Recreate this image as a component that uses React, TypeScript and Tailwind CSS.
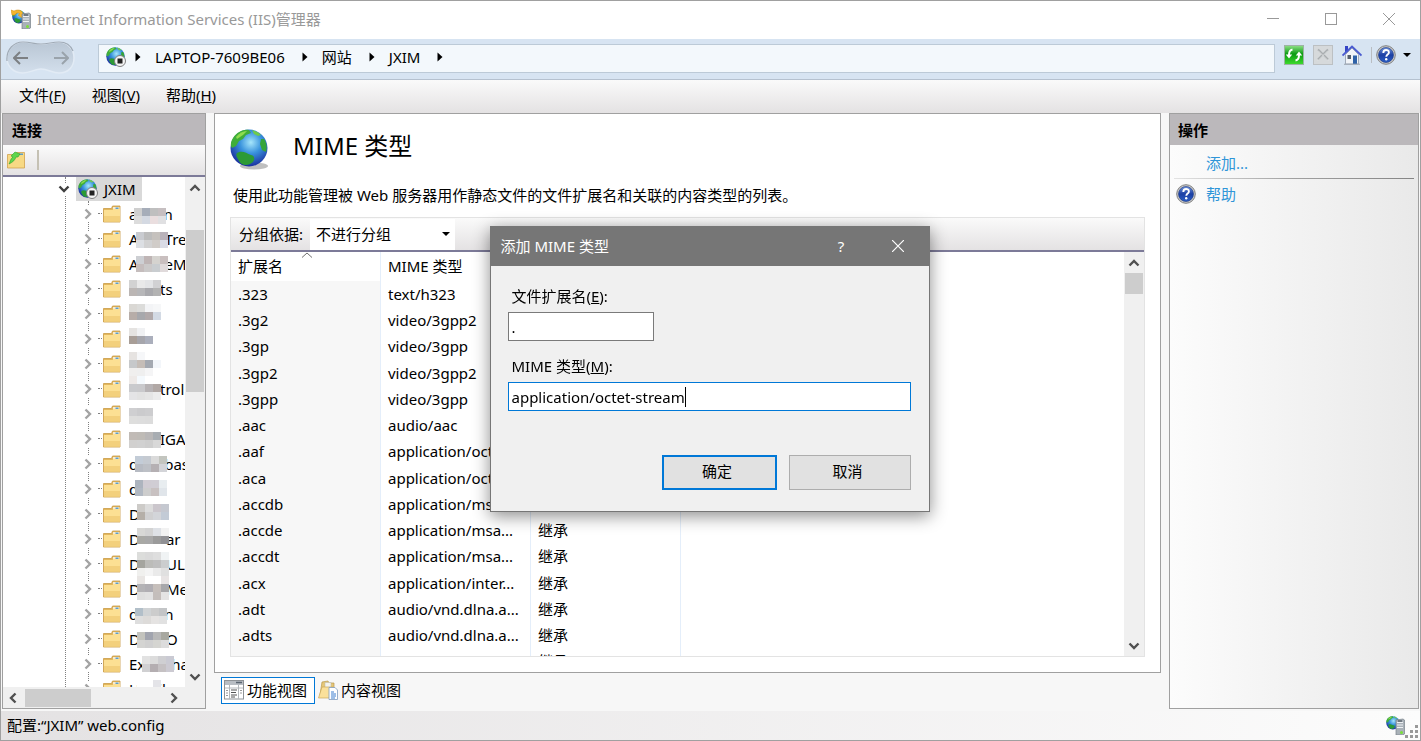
import { useState } from "react";

interface TreeNode {
  pre: string;
  post: string;
  // rows of 8px blocks covering the middle of the name
  cells: string[][];
  y: number;
}

const nodes: TreeNode[] = [
  { pre: "a", post: "n", y: 7, cells: [["#cfcfcf", "#a6adb9", "#bfbfbf", "#c6bfc1"], ["#dcdcdc", "#d4d9e2", "#eadedf", "#e0e0e2"]] },
  { pre: "A", post: "Tre", y: 6, cells: [["#c9cbd0", "#bcbcbc", "#c5c1bd", "#b9b2ba"], ["#dcdfe3", "#d2d2d2", "#d0ccc8", "#d9dbe6"]] },
  { pre: "A", post: "eM", y: 5, cells: [["#cdcfd3", "#bfb5b5", "#d5d3cf", "#c9bfbf"], ["#c5bdbd", "#cbc9c9", "#c9cdd0", "#e0dadb"]] },
  { pre: "", post: "ts", y: 4, cells: [["#d2d2d2", "#e9e9e9", "#e3e4e6", "#d1d1d3"], ["#bbb6b4", "#b7b7b9", "#a9a9ad", "#b3b3b3"]] },
  { pre: "", post: "", y: 3, cells: [["#dad8d4", "#dcdcda", "#f3f4f6", "#f6f7f8"], ["#b7ada8", "#a7a8ac", "#b1a9aa", "#d3dae4"]] },
  { pre: "", post: "", y: 2, cells: [["#e5e3e1", "#f0f1f3"], ["#a89e97", "#a6a6ac", "#abafbc"]] },
  { pre: "", post: "", y: 1, cells: [["#e6e3e1", "#f6f7f9"], ["#c6c8ca", "#c5bdb7", "#a4a9b1", "#f3f6fa"], ["#f0efee", "#efefef", "#f5f5f6"]] },
  { pre: "", post: "trol", y: 0, cells: [["#eeeae8", "#f4f9fd"], ["#c9cacd", "#c9c9cc", "#b7b3b5", "#b1a8a5"], ["#e4e4e6", "#e2e2e2", "#e5e5e5", "#ececec"]] },
  { pre: "", post: "", y: 7, cells: [["#cfcfd1", "#cbcbcd", "#cdcdcf"], ["#dededd", "#dddddd", "#dcdcdc"]] },
  { pre: "", post: "IGA", y: 6, cells: [["#c1bbb6", "#bfbbb6", "#b9b7b7", "#a8adb2"], ["#d1d0cf", "#d1d1d1", "#cecece", "#d8d8d8"]] },
  { pre: "d", post: "bas", y: 5, cells: [["#c3ccd7", "#c5cad1", "#dadada", "#c3c5bf"], ["#b7bbc3", "#bdc0c6", "#b5b0b3", "#d3d4d8"]] },
  { pre: "d", post: "", y: 4, cells: [["#adb4be", "#d0ccd3", "#d0cdd4", "#e8edf0"], ["#b1b8c2", "#cdcdcd", "#c8c1c1", "#e0e5ea"]] },
  { pre: "D", post: "", y: 3, cells: [["#cdcbc8", "#dcdcdc", "#cbc6cc", "#c5c8d0"], ["#b5afa8", "#d0d0d1", "#d3d5d9", "#c3cbd6"]] },
  { pre: "D", post: "ar", y: 2, cells: [["#d8d8d6", "#d3d3d3", "#dee1e6", "#f2f2f2"], ["#a9a9a5", "#a8a8a8", "#9b9b9b", "#919195"]] },
  { pre: "D", post: "UL", y: 1, cells: [["#dcdddb", "#dadada", "#dedede", "#f0f3f4"], ["#a5a59f", "#bcbcb9", "#bfbfbf", "#cbcdce"], ["#f0f0ee", "#f4f4f4", "#eaeaea", "#e0e0e0"]] },
  { pre: "D", post: "Me", y: 0, cells: [["#e9e6e4", "#ffffff", "#ffffff", "#e8e4e4"], ["#b4b3b6", "#b0aeb3", "#c6bfbb", "#a7a7aa"], ["#dfdfdf", "#e2e2e2", "#c4bebb", "#e4e4e4"]] },
  { pre: "d", post: "n", y: 7, cells: [["#b2bfc9", "#d0d3d5", "#cccccc", "#c3c5c7"], ["#dedede", "#dddbd9", "#e5e3e2", "#e1e1e1"]] },
  { pre: "D", post: "O", y: 6, cells: [["#c3c3bd", "#a1a4ae", "#b8b8b8", "#a8a8a0"], ["#d4d4d2", "#d0d0d0", "#d5d5d1", "#dcdcdc"]] },
  { pre: "Ex", post: "ha", y: 5, cells: [["#e2e2e2", "#dcdcdc", "#cfcfd2", "#cacad3"], ["#d0d0d2", "#b4aeb1", "#c5c1c3", "#cccad2"]] },
  { pre: "H", post: "il", y: 4, cells: [["#ffffff", "#ffffff", "#e4e4e8"]] },
];

const mimeTypes = [
  [".323", "text/h323"],
  [".3g2", "video/3gpp2"],
  [".3gp", "video/3gpp"],
  [".3gp2", "video/3gpp2"],
  [".3gpp", "video/3gpp"],
  [".aac", "audio/aac"],
  [".aaf", "application/oct..."],
  [".aca", "application/oct..."],
  [".accdb", "application/msa..."],
  [".accde", "application/msa..."],
  [".accdt", "application/msa..."],
  [".acx", "application/inter..."],
  [".adt", "audio/vnd.dlna.a..."],
  [".adts", "audio/vnd.dlna.a..."],
  [".afm", "application/oct..."],
];

function GlobeBody({ id }: { id: string }) {
  return (
    <>
      <defs>
        <radialGradient id={id} cx="0.55" cy="0.35" r="0.65">
          <stop offset="0" stopColor="#a6e6fb" />
          <stop offset="0.45" stopColor="#3a94dd" />
          <stop offset="1" stopColor="#1a2f9e" />
        </radialGradient>
      </defs>
      <circle cx="19" cy="19" r="18.5" fill={`url(#${id})`} />
      <path d="M3 9C7 3 13 0 19 1l2 3-5 2-3 4-4 2-3 5-4 2C0 16 1 12 3 9z" fill="#3fae3a" />
      <path d="M6 8c3-4 7-6 11-6l-4 4-6 4z" fill="#8fdc4e" />
      <path d="M7 24c5-3 9 0 14 2 5 1 4 7-1 9-4 2-9 1-11-3-1-3-4-5-2-8z" fill="#2c9a35" />
      <path d="M31 10l3 0c3 4 3 9 2 13l-4-2-2-6z" fill="#35a53a" />
      <path d="M22 1c4 1 7 3 9 5l-3 1-4-2z" fill="#6fcb4b" />
    </>
  );
}

function Globe({ id, className }: { id: string; className?: string }) {
  return (
    <svg viewBox="0 0 40 41" className={className} aria-hidden="true">
      <ellipse cx="24" cy="37" rx="14" ry="3.5" fill="#000" opacity="0.25" />
      <GlobeBody id={id} />
    </svg>
  );
}

function SiteIcon({ id }: { id: string }) {
  return (
    <svg viewBox="0 0 40 40" className="size-5 shrink-0" aria-hidden="true">
      <GlobeBody id={id} />
      <circle cx="28" cy="28" r="11" fill="#f4f4f4" stroke="#808080" strokeWidth="2" />
      <rect x="23" y="23" width="10" height="10" fill="#222" />
    </svg>
  );
}

function ServerIcon({ id, arrow }: { id: string; arrow?: boolean }) {
  return (
    <svg viewBox="0 0 20 20" className="size-5 shrink-0" aria-hidden="true">
      <g transform="translate(1 1) scale(0.36)">
        <GlobeBody id={id} />
      </g>
      {arrow && <path d="M0 1l3 1c4-2 8-1 9 3l2 0-3 4-4-3 2-1C7 3 5 4 4 6L1 6z" fill="#f5b52e" stroke="#d38b12" strokeWidth="0.5" />}
      <path d="M11 5l7-1 1.500 1v14l-2 1H11z" fill="#a9b1b8" stroke="#78828a" strokeWidth="0.7" />
      <path d="M12 7.500h6M12 10h6M12 12.500h6" stroke="#eef1f3" strokeWidth="1.2" />
      <path d="M13 6h4" stroke="#39434c" strokeWidth="1" />
      <circle cx="16.500" cy="17.500" r="1.500" fill="#7be03a" />
    </svg>
  );
}

function HelpIcon({ id }: { id: string }) {
  return (
    <svg viewBox="0 0 20 20" className="size-5 shrink-0" aria-hidden="true">
      <defs>
        <linearGradient id={id} x1="0" y1="0" x2="0" y2="1">
          <stop offset="0" stopColor="#6f93dc" />
          <stop offset="0.5" stopColor="#1b3fa4" />
          <stop offset="1" stopColor="#2c5fc6" />
        </linearGradient>
      </defs>
      <circle cx="10" cy="10" r="9.300" fill="#c9c9c9" stroke="#808080" strokeWidth="1" />
      <circle cx="10" cy="10" r="7.500" fill={`url(#${id})`} stroke="#1a3580" strokeWidth="0.6" />
      <path d="M7.300 8c0-4 5.600-3.800 5.600-.6 0 2.200-2.600 2.200-2.600 4.400" fill="none" stroke="#fff" strokeWidth="1.900" />
      <circle cx="10.200" cy="14.200" r="1.200" fill="#fff" />
    </svg>
  );
}

function Folder() {
  return (
    <svg viewBox="0 0 18 18" className="w-[18px] h-[18px] shrink-0" aria-hidden="true">
      <path d="M0.500 17V3.500h8l1-2.500h7.500v16z" fill="#e3b65b" stroke="#c99a45" strokeWidth="0.8" />
      <path d="M10 2h6.500v3H10z" fill="#f6ead0" />
      <rect x="12.500" y="2.500" width="3" height="1.500" fill="#5c9ec9" />
      <path d="M1 5h8.500l1-1H17v12.500H1z" fill="#fce093" />
      <path d="M1 11h16v5.500H1z" fill="#f3d07c" />
    </svg>
  );
}

function Chevron({ dir, className = "" }: { dir: "up" | "down" | "left" | "right"; className?: string }) {
  const d = {
    up: "M1.500 8.500L6 4l4.500 4.500",
    down: "M1.500 3.500L6 8l4.500-4.500",
    left: "M8.500 1.500L4 6l4.500 4.500",
    right: "M3.500 1.500L8 6l-4.500 4.500",
  }[dir];
  return (
    <svg viewBox="0 0 12 12" className={`size-3 shrink-0 ${className}`} aria-hidden="true">
      <path d={d} fill="none" stroke="currentColor" strokeWidth="2.400" />
    </svg>
  );
}

function Triangle() {
  return (
    <svg viewBox="0 0 6 10" className="w-[6px] h-[10px] shrink-0" aria-hidden="true">
      <path d="M0.500 0.500L5.500 5l-5 4.500z" fill="#000" />
    </svg>
  );
}

function DropArrow() {
  return (
    <svg viewBox="0 0 8 4" className="w-2 h-1 shrink-0" aria-hidden="true">
      <path d="M0 0h8L4 4z" fill="#000" />
    </svg>
  );
}

function Mosaic({ cells, y, className }: { cells: string[][]; y: number; className: string }) {
  const width = Math.max(...cells.map((r) => r.length)) * 8;
  return (
    <svg width={width} height={25} className={`relative shrink-0 ${className}`} aria-hidden="true">
      {cells.map((row, r) =>
        row.map((fill, c) => <rect key={`${r}-${c}`} x={c * 8} y={y + r * 8} width={8} height={8} fill={fill} />)
      )}
    </svg>
  );
}

function TitleBar() {
  return (
    <header className="flex h-[38px] shrink-0 items-center bg-white pr-[2px] pb-[2px] pl-[10px] text-[#999]">
      <ServerIcon id="g-title" arrow />
      <h1 className="ml-[6px] flex-1">Internet Information Services (IIS)管理器</h1>
      <button aria-label="最小化" className="flex h-full w-[58px] items-center justify-center">
        <svg width="12" height="12" stroke="currentColor"><path d="M0 5.500h12" /></svg>
      </button>
      <button aria-label="最大化" className="flex h-full w-[58px] items-center justify-center">
        <svg width="12" height="12" fill="none" stroke="currentColor"><rect x="0.500" y="0.500" width="11" height="11" /></svg>
      </button>
      <button aria-label="关闭" className="flex h-full w-[58px] items-center justify-center">
        <svg width="12" height="12" stroke="currentColor"><path d="M0 0l12 12M12 0L0 12" /></svg>
      </button>
    </header>
  );
}

function AddressBar() {
  return (
    <div className="flex h-[41px] shrink-0 items-start border-b border-[#b5c1cf] bg-[#d7e4f2] pt-[5px] pr-[9px] pl-[5px]">
      <div className="relative -mt-1 flex h-9 w-[70px] shrink-0 items-center justify-between px-[7px]">
        <svg viewBox="0 0 70 36" className="absolute inset-0 h-full w-full" aria-hidden="true">
          <defs>
            <linearGradient id="pill" x1="0" y1="0" x2="0" y2="1">
              <stop offset="0" stopColor="#b9c6d4" />
              <stop offset="1" stopColor="#d3dfec" />
            </linearGradient>
          </defs>
          <path d="M17 2C25 2 28 4 35 4S46 2 53 2c9 0 15 7 15 16s-6 15-15 15c-7 0-11-4-18-4s-10 4-18 4C8 33 1 27 1 18S8 2 17 2z" fill="url(#pill)" stroke="#e2ebf5" strokeWidth="1.500" />
          <path d="M1 21C0 9 8 2 17 2c8 0 11 2 18 2s11-2 18-2c7 0 12 4 14 9" fill="none" stroke="#9faab6" strokeWidth="1.200" />
        </svg>
        <button aria-label="后退" className="relative text-[#7d8083]">
          <svg width="16" height="14" fill="none" stroke="currentColor" strokeWidth="2"><path d="M15 7H1M7 1L1 7l6 6" /></svg>
        </button>
        <button aria-label="前进" className="relative text-[#9aa3ab]">
          <svg width="16" height="14" fill="none" stroke="currentColor" strokeWidth="2"><path d="M1 7h14M9 1l6 6-6 6" /></svg>
        </button>
      </div>
      <nav aria-label="地址" className="ml-[22px] flex h-[29px] min-w-0 flex-1 items-center gap-[14px] border border-[#bccad7] bg-[#f3f8fc] pb-[3px] pl-[7px]">
        <span className="-mr-[5px] flex"><SiteIcon id="g-addr" /></span>
        <Triangle />
        <a href="#server" className="pr-[3px]">LAPTOP-7609BE06</a>
        <Triangle />
        <a href="#sites" className="pr-[3px]">网站</a>
        <Triangle />
        <a href="#jxim" className="pr-[3px]">JXIM</a>
        <Triangle />
      </nav>
      <div className="ml-[9px] flex items-center gap-[9px] pt-px">
        <button aria-label="刷新">
          <svg viewBox="0 0 20 20" className="size-5">
            <defs>
              <linearGradient id="refresh" x1="0" y1="0" x2="0" y2="1">
                <stop offset="0" stopColor="#8fe287" />
                <stop offset="0.45" stopColor="#0b9a12" />
                <stop offset="1" stopColor="#3fdc2e" />
              </linearGradient>
            </defs>
            <rect x="0.500" y="0.500" width="19" height="19" fill="url(#refresh)" stroke="#9db3a5" />
            <path d="M8.500 4.500C5.500 5 5 7 5 10" fill="none" stroke="#fff" strokeWidth="2" />
            <path d="M1.800 9.500h6.400L5 13.500z" fill="#fff" />
            <path d="M11.500 15.500c3-.5 3.500-2.500 3.500-5.500" fill="none" stroke="#fff" strokeWidth="2" />
            <path d="M11.800 10.500h6.400L15 6.500z" fill="#fff" />
          </svg>
        </button>
        <button aria-label="停止">
          <svg viewBox="0 0 20 20" className="size-5">
            <rect x="0.500" y="0.500" width="19" height="19" fill="#d6d9db" stroke="#bcc0c3" />
            <path d="M5 4.500l10 10M15 4.500l-10 10" stroke="#a9adb0" strokeWidth="2" />
            <path d="M5 5.500l10 10M15 5.500l-10 10" stroke="#f2f3f4" strokeWidth="0.600" />
          </svg>
        </button>
        <button aria-label="主页">
          <svg viewBox="0 0 20 20" className="size-5">
            <path d="M3 1h3v6H3z" fill="#3444c4" />
            <path d="M3.500 9.500L10 3l6.500 6.500V19h-13z" fill="#f1f4f8" stroke="#8f9bab" strokeWidth="0.800" />
            <path d="M0.500 10.500L10 1.500l9.500 9" fill="none" stroke="#4a5bd0" strokeWidth="1.800" />
            <rect x="5.500" y="10" width="3.500" height="4" fill="#555f6b" />
            <rect x="11" y="10.500" width="4" height="8.500" fill="#2f62a8" />
            <path d="M2 19.300h16" stroke="#a4adb8" strokeWidth="1.200" />
          </svg>
        </button>
        <span className="flex items-center gap-1">
          <span className="h-4 w-px bg-[#b9bdc2]" />
          <button aria-label="帮助" className="flex items-center gap-[7px]">
            <HelpIcon id="h-addr" />
            <DropArrow />
          </button>
        </span>
      </div>
    </div>
  );
}

function MenuBar() {
  const menus = [
    ["文件", "F"],
    ["视图", "V"],
    ["帮助", "H"],
  ];
  return (
    <div className="flex h-[33px] shrink-0 items-center gap-[26px] bg-gradient-to-b from-[#fafafa] to-[#e4e2e3] px-[18px] pb-1">
      {menus.map(([label, key]) => (
        <button key={key}>
          {label}(<u>{key}</u>)
        </button>
      ))}
    </div>
  );
}

function Connections() {
  return (
    <aside className="flex w-[204px] shrink-0 flex-col border border-[#a0a0a0] bg-white">
      <h2 className="flex h-[31px] shrink-0 items-center bg-[#bbb8bb] pl-[9px] font-bold">连接</h2>
      <div className="flex h-8 shrink-0 items-center gap-[11px] border-b-2 border-[#7c7a98] bg-gradient-to-b from-[#fbfbfb] to-[#e4e2e3] pl-1">
        <button aria-label="创建新连接">
          <svg viewBox="0 0 18 18" className="w-[18px] h-[18px]">
            <path d="M0.500 17V3.500h8l1-2h8V17z" fill="#f7d984" stroke="#d0a24e" strokeWidth="0.800" />
            <rect x="12" y="2.500" width="4" height="1.500" fill="#5c9ec9" />
            <path d="M2 13c1-1 1-5 4-7L4 5l4-4 5 2-2 3-2 0c-1 3-3 5-7 7z" fill="#5fd64c" stroke="#2fa32b" strokeWidth="0.600" />
          </svg>
        </button>
        <span className="mx-px h-5 w-[2px] bg-[#c5c1b4]" />
      </div>
      <div className="flex min-h-0 flex-1">
        <div className="relative min-w-0 flex-1 overflow-hidden">
          <span className="absolute inset-y-0 left-[62px] border-l border-dotted border-[#808080]" />
          <div className="relative flex h-6 items-center pl-[55px]">
            <Chevron dir="down" className="bg-white text-[#404040]" />
            <span className="ml-[6px] flex h-full items-center gap-[6px] bg-[#d9d9d9] px-[2px]">
              <SiteIcon id="g-tree" />
              <span className="pr-1">JXIM</span>
            </span>
          </div>
          <ul className="relative">
            <li className="absolute inset-y-0 left-[85px] border-l border-dotted border-[#808080]" />
            {nodes.map((n, i) => (
              <li key={i} className="relative flex h-[25px] items-center pl-[79px] whitespace-nowrap">
                <Chevron dir="right" className="h-4 bg-white text-[#a3a3a3]" />
                <span className="mr-px ml-1 w-1 shrink-0 border-t border-dotted border-[#808080]" />
                <Folder />
                <span className="ml-2 flex shrink-0 items-center">
                  {n.pre}
                  <Mosaic cells={n.cells} y={n.y} className={n.pre ? "-mx-[3px]" : "-mr-px"} />
                  {n.post}
                </span>
              </li>
            ))}
          </ul>
        </div>
        <div className="flex w-5 shrink-0 flex-col items-center bg-[#f0f0f0] pt-[5px] pb-1 text-[#505050]">
          <Chevron dir="up" />
          <div className="mt-9 h-[162px] w-[18px] bg-[#cdcdcd]" />
          <div className="flex-1" />
          <Chevron dir="down" />
        </div>
      </div>
      <div className="flex h-[21px] shrink-0 items-center bg-[#f0f0f0] pr-[25px] pl-1 text-[#505050]">
        <Chevron dir="left" />
        <div className="ml-[6px] h-[18px] w-[66px] bg-[#cdcdcd]" />
        <div className="flex-1" />
        <Chevron dir="right" />
      </div>
    </aside>
  );
}

function MimeTable() {
  return (
    <div className="flex min-h-0 flex-1 flex-col border border-[#e3e3e3]">
      <div className="flex h-[34px] shrink-0 items-center border-b-2 border-[#7c7a98] bg-gradient-to-b from-[#fafafa] to-[#e4e2e3] pl-2">
        <label htmlFor="group">分组依据:</label>
        <div className="ml-[7px] flex h-[31px] w-[145px] items-center bg-white pr-[5px]">
          <select id="group" className="min-w-0 flex-1 appearance-none bg-transparent pl-[6px] outline-none">
            <option>不进行分组</option>
          </select>
          <DropArrow />
        </div>
      </div>
      <div className="flex min-h-0 flex-1">
        <div className="min-w-0 flex-1 overflow-hidden">
          <table className="w-full table-fixed border-separate border-spacing-0 text-left">
            <colgroup>
              <col className="w-[150px]" />
              <col className="w-[150px]" />
              <col className="w-[150px]" />
              <col />
            </colgroup>
            <thead>
              <tr className="h-[29px]">
                <th className="relative border-r border-[#e4eefa] px-[7px] pb-[2px] font-normal">
                  扩展名
                  <svg width="12" height="6" className="absolute top-0 left-[70px]" fill="none" stroke="#707070" aria-hidden="true">
                    <path d="M1 5.500l5-4.500 5 4.500" />
                  </svg>
                </th>
                <th className="border-r border-[#e4eefa] px-[7px] pb-[2px] font-normal">MIME 类型</th>
                <th className="border-r border-[#e4eefa] px-[7px] pb-[2px] font-normal">条目类型</th>
                <th />
              </tr>
            </thead>
            <tbody className="[&>tr:nth-child(4n)]:h-[27px]">
              {mimeTypes.map(([ext, mime]) => (
                <tr key={ext} className="h-[26px] whitespace-nowrap">
                  <td className="border-r border-[#e4eefa] bg-[#f7f7f7] px-[7px] py-0">{ext}</td>
                  <td className="overflow-hidden border-r border-[#e4eefa] px-[7px] py-0">{mime}</td>
                  <td className="border-r border-[#e4eefa] px-[7px] py-0">继承</td>
                  <td />
                </tr>
              ))}
            </tbody>
          </table>
        </div>
        <div className="flex w-5 shrink-0 flex-col items-center bg-[#f0f0f0] pt-[5px] pb-1 text-[#505050]">
          <Chevron dir="up" />
          <div className="mt-1 h-[21px] w-[18px] bg-[#cdcdcd]" />
          <div className="flex-1" />
          <Chevron dir="down" />
        </div>
      </div>
    </div>
  );
}

function ViewTabs() {
  return (
    <div className="flex h-9 shrink-0 items-start gap-[3px] pt-1 pl-[7px]">
      <button className="flex h-[27px] items-center gap-[3px] border border-[#0078d7] bg-white pr-[7px] pb-px pl-[2px]">
        <svg viewBox="0 0 20 20" className="size-5 shrink-0" aria-hidden="true">
          <rect x="0.500" y="0.500" width="19" height="18.500" fill="#fff" stroke="#8e9296" />
          <path d="M1 1h18v4H1z" fill="#b8bdc3" />
          <path d="M12 2.500h6" stroke="#5a6470" strokeWidth="1.500" />
          <path d="M5.500 5v14M14.500 5v14M1 8h18" stroke="#b4b8bc" />
          <path d="M2 10.500h2M2 13h2M2 15.500h2M16 10.500h2M16 13h2" stroke="#999" />
          <path d="M7 10h6M7 12.500h5M7 15h6M7 17h4" stroke="#555" />
        </svg>
        功能视图
      </button>
      <button className="flex h-[27px] items-center gap-[3px] pb-px">
        <svg viewBox="0 0 20 20" className="size-5 shrink-0" aria-hidden="true">
          <path d="M2 15L4 2l6-1 1 2h5v13z" fill="#e6c777" stroke="#b99a4d" strokeWidth="0.700" />
          <path d="M7 2.500h6V10H7z" fill="#f3f3ee" stroke="#b5b5a8" strokeWidth="0.500" />
          <path d="M0.500 18L4 7h11l-3 11z" fill="#fae09a" stroke="#c9a85a" strokeWidth="0.700" />
          <path d="M11 7.500h6l2.500 2.500v9.500H11z" fill="#fff" stroke="#7f9cc0" strokeWidth="0.800" />
          <path d="M13 12h3M13 14h5M13 16h5M13 18h4" stroke="#3c7fd0" />
        </svg>
        内容视图
      </button>
    </div>
  );
}

function Actions() {
  return (
    <aside className="flex w-[250px] shrink-0 flex-col border border-[#a0a0a0] bg-gradient-to-r from-[#fcfcfc] to-[#e9e9e9]">
      <h2 className="flex h-[31px] shrink-0 items-center bg-[#bbb8bb] pl-2 font-bold">操作</h2>
      <div className="flex h-[33px] items-center pt-[2px] pl-9">
        <a href="#add" className="text-[#2f95d8]">添加...</a>
      </div>
      <div className="mr-1 ml-1 h-px bg-gradient-to-r from-[#e4e4e4] via-[#a0a0a0] to-[#858585]" />
      <a href="#help" className="flex h-[30px] items-center gap-[10px] pl-[6px] text-[#2f95d8]">
        <HelpIcon id="h-act" />
        帮助
      </a>
    </aside>
  );
}

function AddMimeDialog() {
  const [ext, setExt] = useState(".");
  const [mime, setMime] = useState("application/octet-stream");
  return (
    <div className="fixed inset-0 flex items-center justify-center pr-[2px] pb-[3px]">
      <form
        role="dialog"
        aria-labelledby="dialog-title"
        onSubmit={(e) => e.preventDefault()}
        className="w-[440px] border border-[#767676] bg-[#f0f0f0] shadow-[0_4px_16px_rgba(0,0,0,0.45)]"
      >
        <div className="flex h-[39px] items-center bg-[#767676] pr-[2px] pb-[2px] pl-[10px] text-white">
          <h2 id="dialog-title" className="flex-1">添加 MIME 类型</h2>
          <button type="button" aria-label="帮助" className="h-full w-[57px]">?</button>
          <button type="button" aria-label="关闭" className="flex h-full w-[57px] items-center justify-center">
            <svg width="12" height="12" stroke="currentColor" strokeWidth="1.200"><path d="M0 0l12 12M12 0L0 12" /></svg>
          </button>
        </div>
        <div className="flex flex-col pt-5 pr-[18px] pb-[21px] pl-[17px]">
          <label htmlFor="ext" className="mb-[6px] pl-1">文件扩展名(<u>E</u>):</label>
          <input
            id="ext"
            value={ext}
            onChange={(e) => setExt(e.target.value)}
            className="h-[29px] w-[146px] border border-[#7a7a7a] bg-white px-[3px] outline-none"
          />
          <label htmlFor="mime" className="mt-[15px] mb-[6px] pl-1">MIME 类型(<u>M</u>):</label>
          <div className="flex h-[29px] items-center border border-[#0078d7] bg-white pl-[3px]">
            <input
              id="mime"
              value={mime}
              onChange={(e) => setMime(e.target.value)}
              className="field-sizing-content max-w-full bg-transparent caret-transparent outline-none"
            />
            <span className="h-5 w-px bg-black" />
          </div>
          <div className="mt-11 flex justify-end gap-3">
            <button type="submit" className="h-[35px] w-[115px] border-2 border-[#0078d7] bg-[#e1e1e1] pr-1 pb-1">确定</button>
            <button type="button" className="h-[35px] w-[122px] border border-[#adadad] bg-[#e1e1e1] pr-1 pb-1">取消</button>
          </div>
        </div>
      </form>
    </div>
  );
}

export default function App() {
  return (
    <div className="flex h-screen flex-col overflow-hidden border border-[#a0a0a0] bg-[#f7f7f7] font-['Noto_Sans','Noto_Sans_CJK_SC',sans-serif] text-[15px] leading-5 text-black">
      <TitleBar />
      <AddressBar />
      <MenuBar />
      <div className="flex min-h-0 flex-1 gap-2 pr-px pl-px">
        <Connections />
        <main className="flex min-w-0 flex-1 flex-col">
          <section className="flex min-h-0 flex-1 flex-col border border-[#a0a0a0] bg-white px-[15px] pt-[15px] pb-[15px]">
            <div className="flex shrink-0 items-center gap-[23px]">
              <Globe id="g-main" className="h-[41px] w-10" />
              <h2 className="pb-2 text-2xl">MIME 类型</h2>
            </div>
            <p className="mt-[15px] mb-3 shrink-0 pl-[3px]">使用此功能管理被 Web 服务器用作静态文件的文件扩展名和关联的内容类型的列表。</p>
            <MimeTable />
          </section>
          <ViewTabs />
        </main>
        <Actions />
      </div>
      <footer className="mt-[2px] flex h-[29px] shrink-0 items-center bg-gradient-to-r from-[#e4e2e3] to-[#fcfcfc] pr-[2px] pb-px pl-[6px]">
        <span className="flex-1">配置:“JXIM” web.config</span>
        <ServerIcon id="g-status" />
        <svg width="13" height="13" fill="#999" className="mt-3" aria-hidden="true">
          <path d="M10 0h3v3h-3zM5 5h3v3H5zM10 5h3v3h-3zM0 10h3v3H0zM5 10h3v3H5zM10 10h3v3h-3z" />
        </svg>
      </footer>
      <AddMimeDialog />
    </div>
  );
}
